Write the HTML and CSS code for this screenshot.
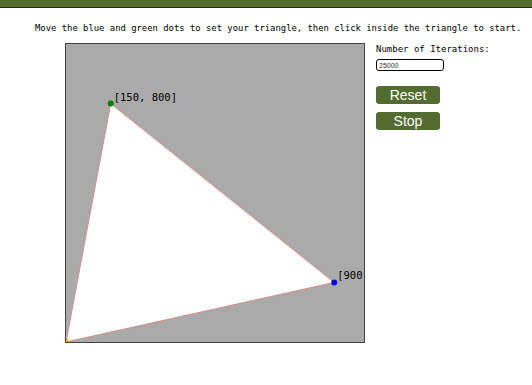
FILE: index.html
```html
<!DOCTYPE html>
<html lang="en">
<head>
  <meta charset="UTF-8" />
  <title>Chaos Game</title>
  <link rel="stylesheet" href="styles.css">
</head>
<body>
  <div class="topbar"></div>
  <p class="instructions">Move the blue and green dots to set your triangle, then click inside the triangle to start.</p>

  <div class="main">
    <div class="board">
      <svg width="298" height="298" viewBox="0 0 300 300">
        <polygon points="0,300 45,60 270,240" fill="#fff" stroke="#d98a8a" stroke-width="1" />
        <circle cx="0" cy="300" r="3" fill="orange" />
        <circle cx="45" cy="60" r="3" fill="green" />
        <circle cx="270" cy="240" r="3" fill="blue" />
        <text x="48" y="57" class="label">[150, 800]</text>
        <text x="273" y="237" class="label">[900, 200]</text>
      </svg>
    </div>

    <div class="controls">
      <label class="iter-label" for="iterations">Number of Iterations:</label>
      <input id="iterations" class="iter-input" type="text" value="25000">
      <button class="btn btn-first">Reset</button>
      <button class="btn">Stop</button>
    </div>
  </div>
</body>
</html>
```

FILE: styles.css
```css
html, body {
  margin: 0;
  padding: 0;
  background: #fff;
  color: #000;
  font-family: "DejaVu Sans Mono", monospace;
}

.topbar {
  height: 7px;
  background: #536c30;
  border-bottom: 1px solid #1e2a10;
}

.instructions {
  margin: 14px 0 0 35px;
  font-size: 8.9px;
  line-height: 12px;
  white-space: nowrap;
}

.main {
  display: flex;
  align-items: flex-start;
  gap: 11px;
  margin: 9px 0 0 65px;
}

.board {
  box-sizing: border-box;
  width: 300px;
  height: 300px;
  background: #aaaaaa;
  border: 1px solid #444;
  overflow: hidden;
}

.board svg {
  display: block;
}

.label {
  font-family: "DejaVu Sans Mono", monospace;
  font-size: 10.6px;
  fill: #000;
}

.controls {
  display: flex;
  flex-direction: column;
  align-items: flex-start;
}

.iter-label {
  font-size: 9px;
  line-height: 12px;
}

.iter-input {
  margin-top: 4px;
  width: 62px;
  height: 8px;
  padding: 1px 2px;
  border: 1px solid #000;
  border-radius: 3px;
  font-family: "Liberation Sans", Arial, sans-serif;
  font-size: 7px;
  color: #333;
}

.btn {
  margin-top: 8px;
  width: 64px;
  height: 18px;
  padding: 0;
  background: #536c30;
  color: #fff;
  border: none;
  border-radius: 3px;
  font-family: "Liberation Sans", Arial, sans-serif;
  font-size: 14px;
  line-height: 18px;
}

.btn-first {
  margin-top: 15px;
}
```
